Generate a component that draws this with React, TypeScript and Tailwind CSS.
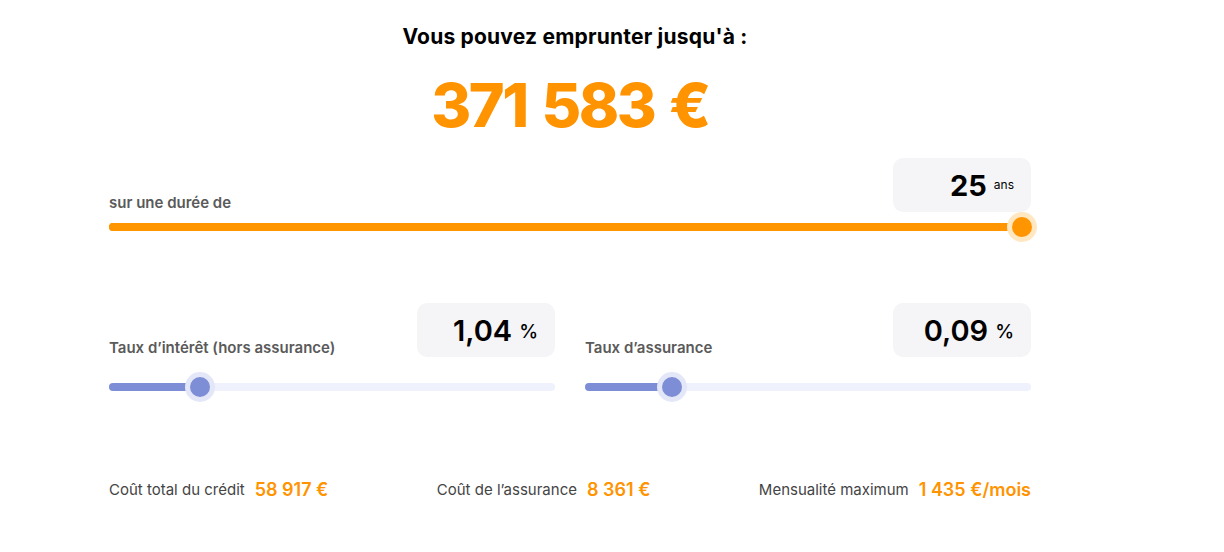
/**
 * App.tsx
 *
 * Simulateur de capacité d'emprunt : montant maximum, durée,
 * taux d'intérêt / d'assurance et récapitulatif des coûts.
 */

interface SliderProps {
  readonly percent: number
  readonly variant: 'orange' | 'blue'
}

const SLIDER_STYLES = {
  orange: {
    track: 'bg-[#FF9500]',
    fill: 'bg-[#FF9500]',
    thumb: 'bg-[#FF9500]',
    halo: 'bg-[#FFE7C2]',
  },
  blue: {
    track: 'bg-[#EFF2FC]',
    fill: 'bg-[#7D8ED6]',
    thumb: 'bg-[#7D8ED6]',
    halo: 'bg-[#E3E7F7]',
  },
}

function Slider({ percent, variant }: SliderProps) {
  const s = SLIDER_STYLES[variant]
  return (
    <div className="relative h-[30px]">
      <div className={`absolute left-0 right-0 top-[11px] h-[8px] rounded-full ${s.track}`} />
      <div
        className={`absolute left-0 top-[11px] h-[8px] rounded-full ${s.fill}`}
        style={{ width: `${percent}%` }}
      />
      <div
        className={`absolute top-0 h-[30px] w-[30px] -translate-x-1/2 rounded-full ${s.halo}`}
        style={{ left: `${percent}%` }}
      />
      <div
        className={`absolute top-[5px] h-[20px] w-[20px] -translate-x-1/2 rounded-full ${s.thumb}`}
        style={{ left: `${percent}%` }}
      />
    </div>
  )
}

interface ValueBoxProps {
  readonly value: string
  readonly unit: string
  readonly bold?: boolean
}

function ValueBox({ value, unit, bold }: ValueBoxProps) {
  return (
    <div className="flex h-[54px] w-[138px] items-center justify-end gap-[7px] rounded-[10px] bg-[#F5F5F7] pr-[17px]">
      <span className={`text-[29px] leading-none text-black ${bold ? 'font-bold' : 'font-semibold'}`}>{value}</span>
      <span className={`leading-none text-black ${unit === 'ans' ? 'text-[12px]' : 'mt-[2px] text-[19px] font-medium'}`}>
        {unit}
      </span>
    </div>
  )
}

interface CostItem {
  readonly label: string
  readonly value: string
}

const COSTS: CostItem[] = [
  { label: 'Coût total du crédit', value: '58 917 €' },
  { label: 'Coût de l’assurance', value: '8 361 €' },
  { label: 'Mensualité maximum', value: '1 435 €/mois' },
]

export default function App() {
  return (
    <div className="min-h-screen bg-white pl-[109px] pt-[24px] font-['Inter',sans-serif] text-[#222]">
      <div className="w-[922px]">
        <h1 className="pl-[10px] text-center text-[21px] font-bold leading-[26px] tracking-[0.2px] text-black">
          Vous pouvez emprunter jusqu'à :
        </h1>
        <div className="mt-[21px] text-center text-[61px] font-extrabold leading-[68px] tracking-[-2.5px] text-[#FF9300] [word-spacing:4px]">
          371 583 €
        </div>

        <div className="mt-[19px] flex items-end justify-between">
          <span className="mb-[-2px] text-[15px] font-semibold text-[#5A5A5A]">sur une durée de</span>
          <ValueBox value="25" unit="ans" bold />
        </div>
        <Slider percent={99} variant="orange" />

        <div className="mt-[61px] grid grid-cols-2 gap-[30px]">
          <div>
            <div className="flex items-end justify-between">
              <span className="mb-[-2px] text-[15px] font-semibold text-[#5A5A5A]">
                Taux d’intérêt (hors assurance)
              </span>
              <ValueBox value="1,04" unit="%" />
            </div>
            <div className="mt-[15px]">
              <Slider percent={20.5} variant="blue" />
            </div>
          </div>
          <div>
            <div className="flex items-end justify-between">
              <span className="mb-[-2px] text-[15px] font-semibold text-[#5A5A5A]">Taux d’assurance</span>
              <ValueBox value="0,09" unit="%" />
            </div>
            <div className="mt-[15px]">
              <Slider percent={19.5} variant="blue" />
            </div>
          </div>
        </div>

        <div className="mt-[76px] flex items-center justify-between leading-[24px]">
          {COSTS.map((cost) => (
            <div key={cost.label} className="flex items-center gap-[10px]">
              <span className="text-[15px] text-[#444]">{cost.label}</span>
              <span className="text-[18px] font-semibold text-[#FF9300]">{cost.value}</span>
            </div>
          ))}
        </div>
      </div>
    </div>
  )
}
